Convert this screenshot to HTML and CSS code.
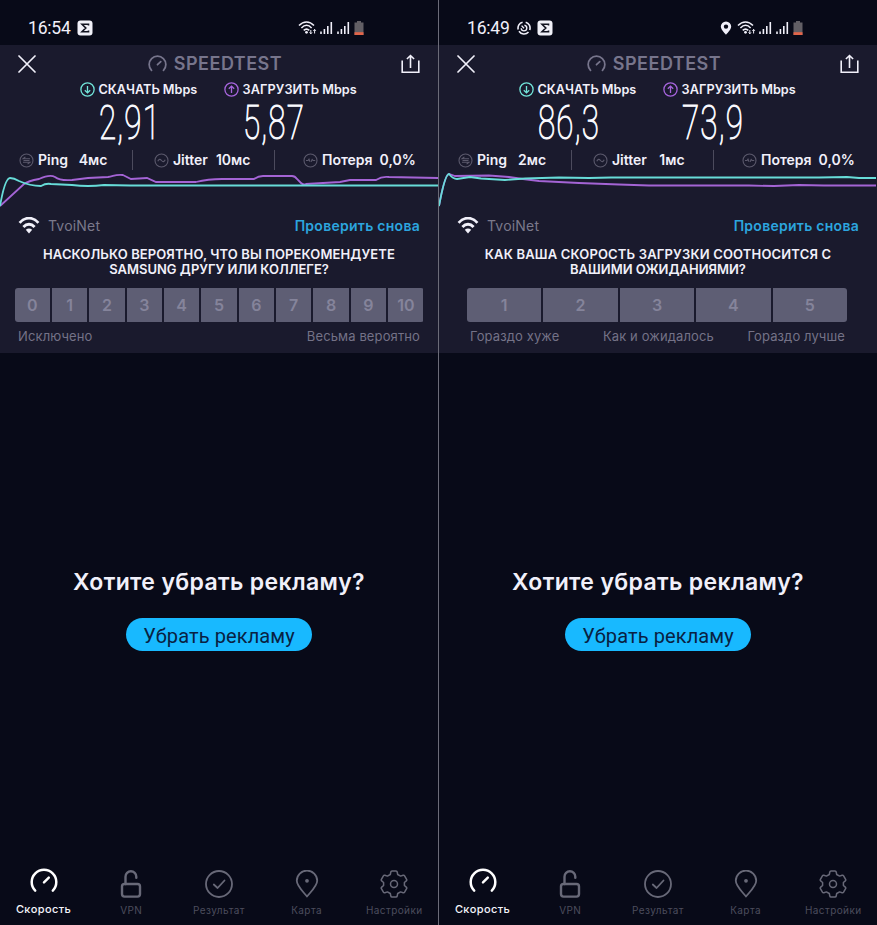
FILE: index.html
```
<!DOCTYPE html>
<html lang="ru">
<head>
<meta charset="utf-8">
<title>Speedtest</title>
<link rel="stylesheet" href="styles.css">
</head>
<body>
<svg class="defs" width="0" height="0" aria-hidden="true">
  <symbol id="gauge" viewBox="0 0 28 25"><path d="M5.2 22.6A12.3 12.3 0 1 1 22.8 22.6M14 14.3l4.8-4.6" fill="none" stroke="currentColor" stroke-linecap="round"/></symbol>
  <symbol id="close" viewBox="0 0 18 18"><path d="M1 1l16 16M17 1L1 17" fill="none" stroke="currentColor" stroke-width="1.7" stroke-linecap="round"/></symbol>
  <symbol id="share" viewBox="0 0 20 20"><path d="M1.2 6.5v11.8h16.6V6.5M9.5 14V1.8M5.9 5L9.5 1.5 13.1 5" fill="none" stroke="currentColor" stroke-width="1.6"/></symbol>
  <symbol id="arrow" viewBox="0 0 15 15"><circle cx="7.5" cy="7.5" r="6.6"/><path d="M7.5 4v6.8M4.8 8.2l2.7 2.7 2.7-2.7"/></symbol>
  <symbol id="ping" viewBox="0 0 15 15"><circle cx="7.5" cy="7.5" r="6.5"/><path d="M11 5.8H4l2.4-2M4 9.2h7l-2.4 2M4.5 7.5h6"/></symbol>
  <symbol id="jitter" viewBox="0 0 15 15"><circle cx="7.5" cy="7.5" r="6.5"/><path d="M3.8 8.3c1-2.4 2.4-2.4 3.7-.8s2.7 1.6 3.7-.8"/></symbol>
  <symbol id="loss" viewBox="0 0 15 15"><circle cx="7.5" cy="7.5" r="6.5"/><path d="M3 7.5h2l1-1.4 1 2.6M8.2 8.8l1-2.4 1 1.1h2"/></symbol>
  <symbol id="wifi" viewBox="0 0 22 17"><path d="M1.6 5.8C7-.4 15-.4 20.4 5.8M5.4 10c3.4-3.7 7.8-3.7 11.2 0" fill="none" stroke="currentColor" stroke-width="2.8"/><path d="M7.8 12.8q3.2-2.8 6.4 0L11 16.4z" fill="currentColor"/></symbol>
  <symbol id="signal" viewBox="0 0 13 14"><path d="M1 13v-2.4M4.4 13V8M7.8 13V5M11.3 13V1" fill="none" stroke="currentColor" stroke-width="1.6"/></symbol>
  <symbol id="battery" viewBox="0 0 10 14"><path d="M3 0h4v1.6h2.5V14h-9V1.6H3z" fill="#625f65"/><path d="M.5 11.2h9V14h-9z" fill="#e2654a"/></symbol>
  <symbol id="netwifi" viewBox="0 0 19 14"><path d="M1 4.6C5.5-.2 11.5-.2 16 4.6M3.4 7C6.8 3.4 10.4 3.4 13.6 7M5.7 9.4q2.8-2.6 5.6 0" fill="none" stroke="currentColor" stroke-width="1.5"/><circle cx="8.5" cy="11.3" r="1.4" fill="currentColor"/><path d="M12.8 9v4M16.6 12.5v-4M11.6 11.4l1.2 1.4 1.2-1.4M15.4 9.8l1.2-1.4 1.2 1.4" fill="none" stroke="currentColor"/></symbol>
  <symbol id="sigma" viewBox="0 0 16 16"><rect x=".5" y=".5" width="15" height="15" rx="3" fill="#f0f0f8"/><path d="M11.5 5.6V4.2H5L8.8 8 5 11.8h6.5v-1.4" fill="none" stroke="#11121f" stroke-width="1.6"/></symbol>
  <symbol id="timer" viewBox="0 0 14 14"><path d="M8.7 1.2A6 6 0 0 1 12.7 9M11.5 11A6 6 0 0 1 2 10.3M1.2 8.5A6 6 0 0 1 5.6 1.2" fill="none" stroke="currentColor" stroke-width="1.6"/><path d="M4.6 4.6L7 7.2M4.2 7.3a2.8 2.8 0 1 0 3.2-3" fill="none" stroke="currentColor" stroke-width="1.4"/></symbol>
  <symbol id="place" viewBox="0 0 12 14"><path fill-rule="evenodd" d="M6 .4a5.2 5.2 0 0 1 5.2 5.2C11.2 8.8 6 13.8 6 13.8S.8 8.8.8 5.6A5.2 5.2 0 0 1 6 .4zM6 3.4a2.2 2.2 0 1 0 0 4.4 2.2 2.2 0 0 0 0-4.4z" fill="currentColor"/></symbol>
  <symbol id="lock" viewBox="0 0 28 28"><rect x="5" y="14" width="18" height="12.6" rx="2.5"/><path d="M8.5 14V6.7a5.4 5.4 0 0 1 10.8 0v1"/></symbol>
  <symbol id="check" viewBox="0 0 28 28"><circle cx="14" cy="14" r="13"/><path d="M8.8 14.5l3.8 3.5 6.9-7.5"/></symbol>
  <symbol id="pin" viewBox="0 0 28 28"><path d="M14 26.5C10 21.5 3.8 16 3.8 10.8a10.2 10.2 0 0 1 20.4 0c0 5.2-6.2 10.7-10.2 15.7z"/><circle cx="14" cy="10.8" r="1" fill="currentColor"/></symbol>
  <symbol id="gear" viewBox="0 0 28 28"><path d="M12 1h4q1 0 1.2 1l.5 2.5 2.9 1.6 2.500-.8q1-.3 1.5.5l2 3.500q.5.9-.3 1.6l-1.9 1.6v3l1.9 1.6q.8.7.3 1.6l-2 3.500q-.5.8-1.5.5l-2.500-.8-2.900 1.600-.5 2.500q-.2 1-1.200 1h-4q-1 0-1.200-1l-.5-2.500-2.900-1.600-2.500.8q-1 .3-1.500-.5l-2-3.500q-.5-.9.300-1.600l1.900-1.600v-3l-1.900-1.600q-.8-.7-.3-1.600l2-3.500q.5-.8 1.500-.5l2.500.8 2.900-1.600.5-2.500q.2-1 1.200-1z"/><circle cx="14" cy="14" r="3.5"/></symbol>
</svg>
<main class="screens">
  <section class="phone">
    <div class="status">
      <span class="clock">16:54</span><svg class="sigma"><use href="#sigma"/></svg>
      <div class="tray"><svg class="netwifi"><use href="#netwifi"/></svg><svg class="signal"><use href="#signal"/></svg><svg class="signal"><use href="#signal"/></svg><svg class="battery"><use href="#battery"/></svg></div>
    </div>
    <div class="results">
      <header class="top"><svg class="close"><use href="#close"/></svg><div class="brand"><svg><use href="#gauge"/></svg><span>SPEEDTEST</span></div><svg class="share"><use href="#share"/></svg></header>
      <div class="speeds">
        <div class="speed down"><div class="label"><svg><use href="#arrow"/></svg><b>СКАЧАТЬ</b><span>Mbps</span></div><div class="value"><span>2,91</span></div></div>
        <div class="speed up"><div class="label"><svg><use href="#arrow"/></svg><b>ЗАГРУЗИТЬ</b><span>Mbps</span></div><div class="value"><span>5,87</span></div></div>
      </div>
      <div class="stats">
        <div class="stat"><svg><use href="#ping"/></svg><span class="name">Ping</span><span class="num">4мс</span></div>
        <div class="stat"><svg><use href="#jitter"/></svg><span class="name">Jitter</span><span class="num">10мс</span></div>
        <div class="stat"><svg><use href="#loss"/></svg><span class="name">Потеря</span><span class="num">0,0%</span></div>
      </div>
      <svg class="chart" viewBox="0 0 438 36">
        <path class="line-up" d="M0 34L24 12Q28 9 39 7Q50 2 55 5Q60 9 72 8L88 6L108 5C114 4 116 2 123 3Q127 5 131 7L147 6L156 10H196Q208 7 222 7H254Q258 4 263 4H292Q295 4 297 7L301 11Q303 13 306 12L340 10L350 8L376 8Q382 4 389 5L438 6"/>
        <path class="line-down" d="M0 34Q5 6 10 6Q14 6 19 9Q30 14 41 14Q46 11 51 12L72 13Q88 15 104 13L130 13.5H438"/>
      </svg>
      <div class="provider"><svg><use href="#wifi"/></svg><span class="isp">TvoiNet</span><a class="retry">Проверить снова</a></div>
      <div class="question q-brand"><div>НАСКОЛЬКО ВЕРОЯТНО, ЧТО ВЫ ПОРЕКОМЕНДУЕТЕ</div><div class="second">SAMSUNG ДРУГУ ИЛИ КОЛЛЕГЕ?</div></div>
      <div class="scale eleven"><span>0</span><span>1</span><span>2</span><span>3</span><span>4</span><span>5</span><span>6</span><span>7</span><span>8</span><span>9</span><span>10</span></div>
      <div class="captions wide"><span>Исключено</span><span>Весьма вероятно</span></div>
    </div>
    <div class="promo"><h2>Хотите убрать рекламу?</h2><button><span>Убрать рекламу</span></button></div>
    <nav class="tabs">
      <div class="tab active"><svg><use href="#gauge"/></svg><span>Скорость</span></div>
      <div class="tab"><svg class="bold"><use href="#lock"/></svg><span>VPN</span></div>
      <div class="tab"><svg><use href="#check"/></svg><span>Результат</span></div>
      <div class="tab"><svg><use href="#pin"/></svg><span>Карта</span></div>
      <div class="tab"><svg class="fine"><use href="#gear"/></svg><span>Настройки</span></div>
    </nav>
  </section>
  <section class="phone">
    <div class="status">
      <span class="clock">16:49</span><svg class="timer"><use href="#timer"/></svg><svg class="sigma"><use href="#sigma"/></svg>
      <div class="tray"><svg class="place"><use href="#place"/></svg><svg class="netwifi"><use href="#netwifi"/></svg><svg class="signal"><use href="#signal"/></svg><svg class="signal"><use href="#signal"/></svg><svg class="battery"><use href="#battery"/></svg></div>
    </div>
    <div class="results">
      <header class="top"><svg class="close"><use href="#close"/></svg><div class="brand"><svg><use href="#gauge"/></svg><span>SPEEDTEST</span></div><svg class="share"><use href="#share"/></svg></header>
      <div class="speeds">
        <div class="speed down"><div class="label"><svg><use href="#arrow"/></svg><b>СКАЧАТЬ</b><span>Mbps</span></div><div class="value"><span>86,3</span></div></div>
        <div class="speed up"><div class="label"><svg><use href="#arrow"/></svg><b>ЗАГРУЗИТЬ</b><span>Mbps</span></div><div class="value"><span>73,9</span></div></div>
      </div>
      <div class="stats">
        <div class="stat"><svg><use href="#ping"/></svg><span class="name">Ping</span><span class="num">2мс</span></div>
        <div class="stat"><svg><use href="#jitter"/></svg><span class="name">Jitter</span><span class="num">1мс</span></div>
        <div class="stat"><svg><use href="#loss"/></svg><span class="name">Потеря</span><span class="num">0,0%</span></div>
      </div>
      <svg class="chart" viewBox="0 0 438 36">
        <path class="line-up" d="M0 34Q6 2 10 2L16 4L50 3.5L70 5L84 7L100 9L140 11L180 12.5L210 13.5H310L335 14L360 13L385 13.5L437 13.5"/>
        <path class="line-down" d="M0 34Q6 2 10 2Q14 7 18 7L31 5L42 6.5L66 8L86 6.5L120 5.5L150 6L172 5.5H380L408 5L420 6L437 6"/>
      </svg>
      <div class="provider"><svg><use href="#wifi"/></svg><span class="isp">TvoiNet</span><a class="retry">Проверить снова</a></div>
      <div class="question q-speed"><div>КАК ВАША СКОРОСТЬ ЗАГРУЗКИ СООТНОСИТСЯ С</div><div class="second">ВАШИМИ ОЖИДАНИЯМИ?</div></div>
      <div class="scale five"><span>1</span><span>2</span><span>3</span><span>4</span><span>5</span></div>
      <div class="captions narrow"><span>Гораздо хуже</span><span>Как и ожидалось</span><span>Гораздо лучше</span></div>
    </div>
    <div class="promo"><h2>Хотите убрать рекламу?</h2><button><span>Убрать рекламу</span></button></div>
    <nav class="tabs">
      <div class="tab active"><svg><use href="#gauge"/></svg><span>Скорость</span></div>
      <div class="tab"><svg class="bold"><use href="#lock"/></svg><span>VPN</span></div>
      <div class="tab"><svg><use href="#check"/></svg><span>Результат</span></div>
      <div class="tab"><svg><use href="#pin"/></svg><span>Карта</span></div>
      <div class="tab"><svg class="fine"><use href="#gear"/></svg><span>Настройки</span></div>
    </nav>
  </section>
</main>
</body>
</html>
```
FILE: styles.css
```
* { box-sizing: border-box; }
body { margin: 0; background: #080a18; color: #f1f0fa; font-family: Inter, "Noto Sans", sans-serif; }
svg { display: block; flex: none; }
.defs { position: absolute; }
.screens { display: grid; grid-template-columns: 438px 438px; gap: 1px; width: 877px; height: 925px; background: #6b6b78; overflow: hidden; }
.phone { display: flex; flex-direction: column; height: 925px; background: #080a18; white-space: nowrap; }

.status { display: flex; align-items: center; height: 45px; padding: 11px 74px 0 28px; }
.clock { width: 43px; font: 400 17.5px/20px Roboto, sans-serif; letter-spacing: -.2px; }
.sigma { width: 16px; height: 16px; margin-left: 6px; }
.timer { width: 14px; height: 14px; margin-left: 7px; }
.tray { display: flex; align-items: center; gap: 4px; margin-left: auto; }
.netwifi { width: 19px; height: 14px; margin-right: -1px; }
.signal { width: 13px; height: 14px; }
.place { width: 12px; height: 14px; margin-right: 1px; }
.battery { width: 10px; height: 14px; }

.results { height: 308px; background: #1a1a2d; }
.top { display: flex; align-items: center; justify-content: space-between; height: 37px; padding: 0 17px 0 18px; }
.close { width: 18px; height: 18px; }
.share { width: 20px; height: 20px; }
.brand { display: flex; align-items: center; gap: 7px; margin-right: 7px; color: #77758c; font-size: 18px; font-weight: 600; line-height: 22px; letter-spacing: .5px; }
.brand svg { width: 19px; height: 17px; stroke-width: 2.6px; }
.speeds { display: flex; height: 66px; }
.speed { width: 144px; }
.speed.down { margin-left: 79.5px; color: #72e5da; }
.speed.up { color: #a765dd; }
.label { display: flex; align-items: center; height: 15px; font-size: 12.7px; line-height: 15px; }
.label svg { width: 15px; height: 15px; margin-right: 4px; fill: none; stroke: currentColor; stroke-width: 1.3px; }
.up svg { transform: rotate(180deg); }
.label b, .label span { color: #f1f0fa; font-weight: 600; }
.label b { margin-right: 3px; }
.up .label b { letter-spacing: .1px; }
.value { height: 50px; padding: 3px 0 0 19px; color: #fafaff; font: 100 49px/46px Roboto, sans-serif; }
.value span { display: block; width: 100px; letter-spacing: 1.8px; transform: scaleX(.64); transform-origin: 0 50%; -webkit-text-stroke: 1.1px #fafaff; }
.stats { display: grid; grid-template-columns: 132px 142px 164px; align-items: center; height: 24px; font-size: 14px; font-weight: 600; line-height: 20px; }
.stat { display: flex; align-items: center; height: 20px; border-left: 1px solid #4c4b5d; padding-left: 21px; }
.stat:first-child { border: 0; padding-left: 19px; }
.stat:last-child { padding-left: 28px; }
.stat svg { width: 15px; height: 15px; margin-right: 4px; fill: none; stroke: #5b596c; stroke-width: 1.1px; }
.stat .num { min-width: 34px; margin-left: 8px; text-align: center; }
.stat:last-child .num { margin-left: 7px; }
.chart { width: 438px; height: 36px; fill: none; stroke-width: 1.8px; }
.line-up { stroke: #a464d5; }
.line-down { stroke: #67dcd8; }
.provider { display: flex; align-items: center; height: 35px; padding: 0 18px; font-size: 14px; }
.provider svg { width: 22px; height: 17px; }
.isp { margin-left: 8px; color: #7b798b; letter-spacing: .2px; }
.retry { margin-left: auto; color: #2ca5df; font-weight: 600; letter-spacing: .27px; }
.question { height: 45px; padding-top: 4px; font-size: 13px; font-weight: 600; line-height: 15px; text-align: center; }
.q-brand { letter-spacing: .1px; }
.q-speed { letter-spacing: .16px; }
.question .second { letter-spacing: 0; }
.scale { display: grid; gap: 2px; height: 34px; border-radius: 3px; overflow: hidden; }
.scale span { display: flex; align-items: center; justify-content: center; background: #5e5e74; color: #85849b; font-size: 16px; font-weight: 600; }
.eleven { grid-template-columns: repeat(11, 1fr); width: 409px; margin-left: 14.5px; }
.five { grid-template-columns: repeat(5, 1fr); width: 380px; margin-left: 28px; }
.captions { display: flex; justify-content: space-between; height: 30px; font-size: 13px; line-height: 28px; letter-spacing: .12px; color: #747287; }
.wide { padding: 0 18px; }
.narrow { padding: 0 32px 0 31px; }
.narrow span:nth-child(2) { margin-left: 10px; }

.promo { display: flex; flex-direction: column; align-items: center; height: 500px; padding-top: 214px; }
.promo h2 { margin: 0; font-size: 23px; font-weight: 600; line-height: 30px; letter-spacing: .35px; }
.promo button { display: flex; align-items: center; justify-content: center; width: 186px; height: 33px; margin-top: 21px; padding: 2px 0 0; border: 0; border-radius: 17px; background: #18b9ff; color: #092142; font: 400 20px/30px Roboto, sans-serif; letter-spacing: .1px; }
.tabs { display: grid; grid-template-columns: repeat(5, 87.7px); height: 72px; margin-left: -.3px; padding-top: 17px; }
.tab { display: flex; flex-direction: column; align-items: center; color: #4c4d5d; font-size: 10px; line-height: 14px; letter-spacing: .4px; }
.tab svg { width: 28px; height: 28px; margin-bottom: 5px; fill: none; stroke: #686978; stroke-width: 1.8px; stroke-linejoin: round; stroke-linecap: round; }
.tab .bold { stroke-width: 2.4px; }
.tab .fine { stroke-width: 1.5px; }
.active { color: #f4f4fb; font-size: 11px; font-weight: 500; }
.active svg { height: 25px; margin: -2px 0 9px; color: #fff; stroke-width: 2.5px; }
```
